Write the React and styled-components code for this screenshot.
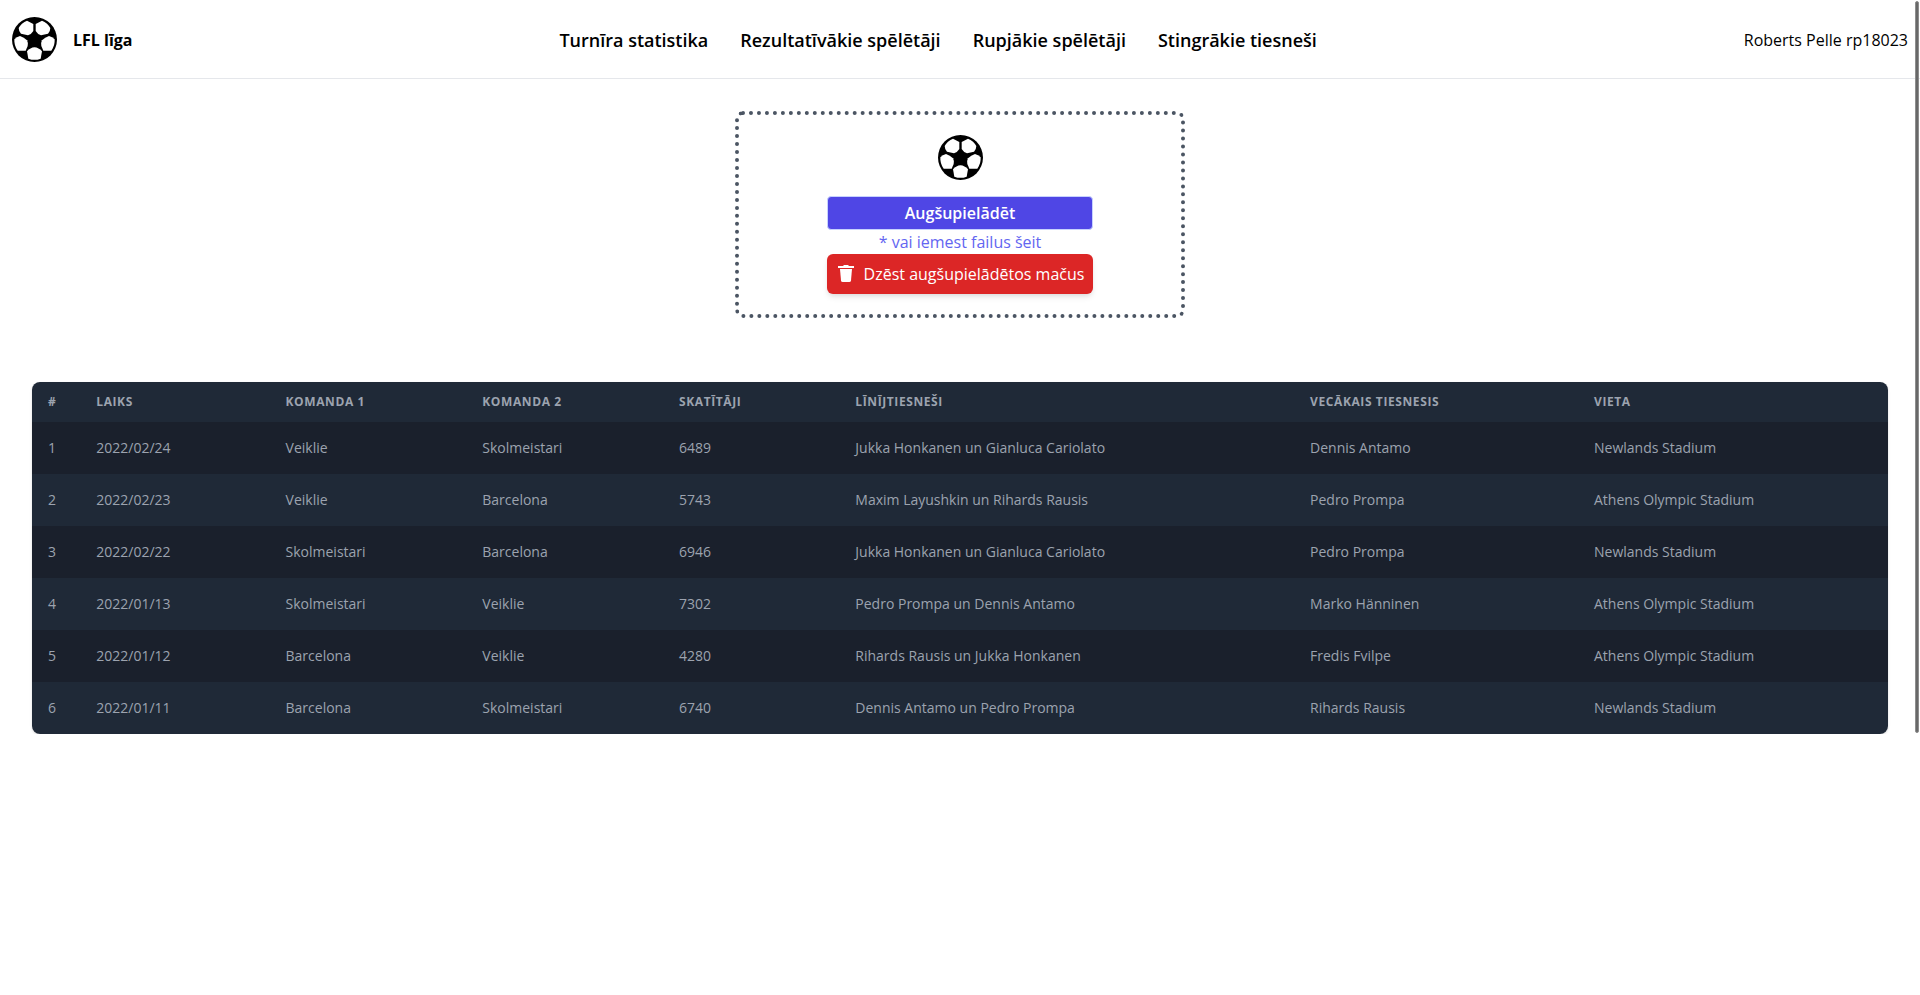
import React from "react";
import styled, { createGlobalStyle } from "styled-components";

const GlobalStyle = createGlobalStyle`
  *, *::before, *::after { box-sizing: border-box; }
  body {
    margin: 0;
    background: #fff;
    color: #000;
    font-family: "Open Sans", "Noto Sans", sans-serif;
    font-size: 16px;
    line-height: 24px;
  }
  button { font: inherit; cursor: pointer; }
`;

const Page = styled.div`
  position: relative;
`;

const ScrollThumb = styled.div`
  position: absolute;
  top: 1px;
  right: 1px;
  bottom: 1px;
  width: 4px;
  border: 1px solid #8e8e8e;
  border-radius: 2px;
  background: #686868;
`;

const Header = styled.header`
  display: flex;
  align-items: center;
  justify-content: space-between;
  padding: 17px 12px 16px;
  border-bottom: 1px solid #e5e7eb;
`;

const Brand = styled.a`
  display: flex;
  align-items: center;
  gap: 16px;
  color: inherit;
  font-weight: 700;
  text-decoration: none;
`;

const BallSvg = styled.svg`
  display: block;
  width: 45px;
  height: 45px;
`;

const Nav = styled.nav`
  display: flex;
  gap: 32px;
`;

const NavLink = styled.a`
  color: inherit;
  font-size: 18px;
  font-weight: 600;
  line-height: 28px;
  text-decoration: none;
`;

const Main = styled.main`
  display: flex;
  flex-direction: column;
  gap: 64px;
  padding: 32px 32px 0;
`;

const DropZone = styled.section`
  display: flex;
  flex-direction: column;
  align-items: center;
  align-self: center;
  width: 450px;
  max-width: 100%;
  padding: 20px;
  border: 4px dotted #4b5563;
  border-radius: 8px;
`;

const Actions = styled.div`
  display: flex;
  flex-direction: column;
  width: 266px;
  padding-top: 16px;
`;

const UploadButton = styled.button`
  padding: 4px;
  border: 1px solid #c7d2fe;
  border-radius: 4px;
  background: #4f46e5;
  color: #fff;
  font-weight: 600;
`;

const Hint = styled.span`
  color: #6366f1;
  text-align: center;
`;

const DeleteButton = styled.button`
  display: flex;
  align-items: center;
  justify-content: center;
  gap: 8px;
  padding: 8px;
  border: 0;
  border-radius: 6px;
  background: #dc2626;
  color: #fff;
  white-space: nowrap;
  box-shadow: 0 4px 6px -1px rgba(0, 0, 0, 0.1), 0 2px 4px -1px rgba(0, 0, 0, 0.06);
`;

const TrashSvg = styled.svg`
  flex: none;
  width: 20px;
  height: 20px;
`;

const TableCard = styled.div`
  overflow: hidden;
  border-radius: 8px;
  box-shadow: 0 1px 3px rgba(0, 0, 0, 0.1), 0 1px 2px rgba(0, 0, 0, 0.06);
`;

const Table = styled.table`
  width: 100%;
  table-layout: fixed;
  border-collapse: collapse;
  background: #1f2937;
  color: #9ca3af;
  text-align: left;
`;

const Col = styled.col`
  width: ${(p) => p.$share}%;
`;

const HeadCell = styled.th`
  padding: 12px 16px;
  font-size: 12px;
  font-weight: 700;
  line-height: 16px;
  letter-spacing: 0.05em;
  text-transform: uppercase;
  white-space: nowrap;
`;

const Row = styled.tr`
  &:nth-child(odd) { background: #1a202c; }
`;

const Cell = styled.td`
  padding: 16px;
  font-size: 14px;
  line-height: 20px;
  white-space: nowrap;
`;

const navItems = [
  "Turnīra statistika",
  "Rezultatīvākie spēlētāji",
  "Rupjākie spēlētāji",
  "Stingrākie tiesneši",
];

const columns = [
  { label: "#", share: 2.6 },
  { label: "Laiks", share: 10.2 },
  { label: "Komanda 1", share: 10.6 },
  { label: "Komanda 2", share: 10.6 },
  { label: "Skatītāji", share: 9.5 },
  { label: "Līnījtiesneši", share: 24.5 },
  { label: "Vecākais tiesnesis", share: 15.3 },
  { label: "Vieta", share: 16.7 },
];

const matches = [
  ["2022/02/24", "Veiklie", "Skolmeistari", "6489", "Jukka Honkanen un Gianluca Cariolato", "Dennis Antamo", "Newlands Stadium"],
  ["2022/02/23", "Veiklie", "Barcelona", "5743", "Maxim Layushkin un Rihards Rausis", "Pedro Prompa", "Athens Olympic Stadium"],
  ["2022/02/22", "Skolmeistari", "Barcelona", "6946", "Jukka Honkanen un Gianluca Cariolato", "Pedro Prompa", "Newlands Stadium"],
  ["2022/01/13", "Skolmeistari", "Veiklie", "7302", "Pedro Prompa un Dennis Antamo", "Marko Hänninen", "Athens Olympic Stadium"],
  ["2022/01/12", "Barcelona", "Veiklie", "4280", "Rihards Rausis un Jukka Honkanen", "Fredis Fvilpe", "Athens Olympic Stadium"],
  ["2022/01/11", "Barcelona", "Skolmeistari", "6740", "Dennis Antamo un Pedro Prompa", "Rihards Rausis", "Newlands Stadium"],
];

function Ball() {
  return (
    <BallSvg viewBox="0 0 135 135" aria-hidden="true">
      <circle cx="67.5" cy="67.5" r="67.5" fill="#000" />
      <g fill="#fff">
        <path d="M30 20Q37 14 45 11L64 21V42Q58 52 48 55L27 50Q20 42 20 33Q24 26 30 20Z" />
        <path d="M105 20Q98 14 90 11L71 21V42Q77 52 87 55L108 50Q115 42 115 33Q111 26 105 20Z" />
        <path d="M7 67Q14 59 24 57Q36 61 45 70Q49 77 47 87L41 101H17Q6 86 7 67Z" />
        <path d="M128 67Q121 59 111 57Q99 61 90 70Q86 77 88 87L94 101H118Q129 86 128 67Z" />
        <path d="M45 103Q55 92 67.5 91Q80 92 90 103L86 125Q67.5 132 49 125Z" />
      </g>
    </BallSvg>
  );
}

function Trash() {
  return (
    <TrashSvg viewBox="0 0 20 20" fill="currentColor" aria-hidden="true">
      <path d="M2 2h5l1-1h4l1 1h5v2H2z" />
      <path d="M4 5h12l-1 11.500q-.2 1.500-1.700 1.500H6.700q-1.500 0-1.700-1.500z" />
    </TrashSvg>
  );
}

export default function App() {
  return (
    <Page>
      <GlobalStyle />
      <Header>
        <Brand href="#">
          <Ball />
          LFL līga
        </Brand>
        <Nav>
          {navItems.map((item) => (
            <NavLink key={item} href="#">{item}</NavLink>
          ))}
        </Nav>
        <span>Roberts Pelle rp18023</span>
      </Header>
      <Main>
        <DropZone>
          <Ball />
          <Actions>
            <UploadButton type="button">Augšupielādēt</UploadButton>
            <Hint>* vai iemest failus šeit</Hint>
            <DeleteButton type="button">
              <Trash />
              Dzēst augšupielādētos mačus
            </DeleteButton>
          </Actions>
        </DropZone>
        <TableCard>
          <Table>
            <colgroup>
              {columns.map((c) => <Col key={c.label} $share={c.share} />)}
            </colgroup>
            <thead>
              <tr>
                {columns.map((c) => <HeadCell key={c.label} scope="col">{c.label}</HeadCell>)}
              </tr>
            </thead>
            <tbody>
              {matches.map((match, i) => (
                <Row key={match[0]}>
                  <Cell>{i + 1}</Cell>
                  {match.map((value, j) => <Cell key={j}>{value}</Cell>)}
                </Row>
              ))}
            </tbody>
          </Table>
        </TableCard>
      </Main>
      <ScrollThumb />
    </Page>
  );
}
